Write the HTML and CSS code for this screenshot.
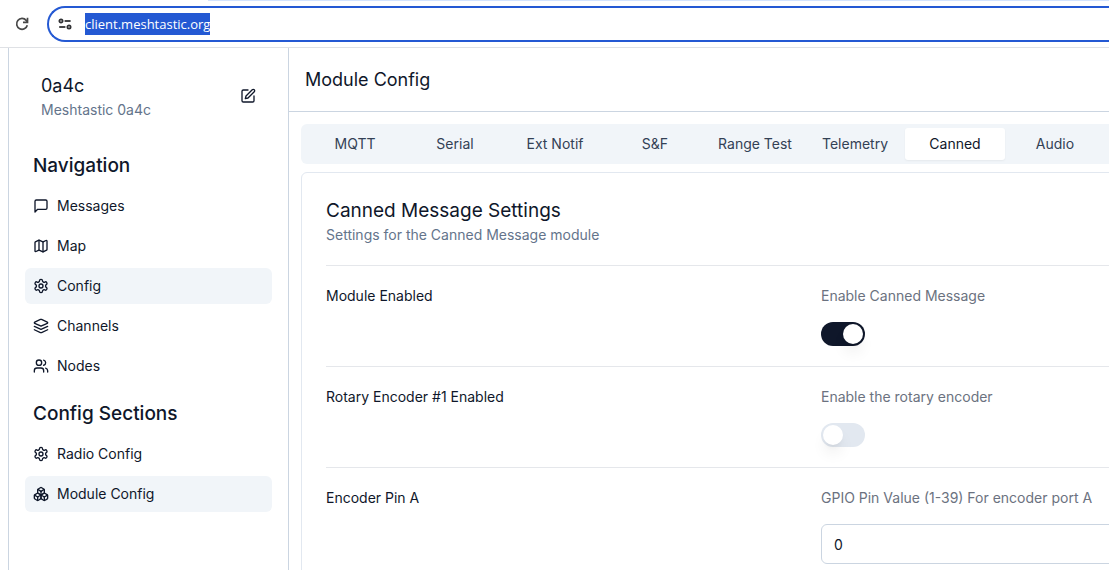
FILE: index.html
```html
<!doctype html>
<html lang="en">

<head>
	<meta charset="utf-8">
	<title>Meshtastic Web Client</title>
	<link rel="stylesheet" href="styles.css">
</head>

<body>
	<div class="browser">
		<div class="tabstrip"></div>
		<button class="reload" type="button" aria-label="Reload">
			<svg width="16" height="16" viewBox="0 0 16 16" fill="none" stroke="#474747" stroke-width="1.7">
				<path d="M13.3 9.2A5.4 5.4 0 1 1 12.2 4.4L13.4 5.8" />
				<path d="M13.5 1.8v4.6H9" />
			</svg>
		</button>
		<div class="omnibox">
			<svg width="14" height="14" viewBox="0 0 14 14" fill="none" stroke="#303134" stroke-width="1.8">
				<circle cx="3" cy="4" r="1.6" />
				<path d="M6.6 4H12.6" />
				<circle cx="11" cy="10" r="1.6" />
				<path d="M1.2 10h6.2" />
			</svg>
			<span class="url">client.meshtastic.org</span>
		</div>
	</div>
	<div class="app">
		<aside class="sidebar">
			<div class="device">
				<div>
					<div class="short-name">0a4c</div>
					<div class="subtle">Meshtastic 0a4c</div>
				</div>
				<button class="edit" type="button" aria-label="Edit device name">
					<svg class="icon" viewBox="0 0 24 24">
						<path d="M12 3H5a2 2 0 0 0-2 2v14a2 2 0 0 0 2 2h14a2 2 0 0 0 2-2v-7" />
						<path d="M18.375 2.625a2.121 2.121 0 1 1 3 3L12 15l-4 1 1-4Z" />
					</svg>
				</button>
			</div>
			<nav>
				<section class="nav-group">
					<h4>Navigation</h4>
					<button class="nav-item" type="button">
						<svg class="icon" viewBox="0 0 24 24">
							<path d="M21 15a2 2 0 0 1-2 2H7l-4 4V5a2 2 0 0 1 2-2h14a2 2 0 0 1 2 2z" />
						</svg>
						Messages
					</button>
					<button class="nav-item" type="button">
						<svg class="icon" viewBox="0 0 24 24">
							<path d="M14.106 5.553a2 2 0 0 0 1.788 0l3.659-1.83A1 1 0 0 1 21 4.619v12.764a1 1 0 0 1-.553.894l-4.553 2.277a2 2 0 0 1-1.788 0l-4.212-2.106a2 2 0 0 0-1.788 0l-3.659 1.83A1 1 0 0 1 3 19.381V6.618a1 1 0 0 1 .553-.894l4.553-2.277a2 2 0 0 1 1.788 0z" />
							<path d="M15 5.764v15" />
							<path d="M9 3.236v15" />
						</svg>
						Map
					</button>
					<button class="nav-item active" type="button">
						<svg class="icon" viewBox="0 0 24 24">
							<path d="M12.22 2h-.44a2 2 0 0 0-2 2v.18a2 2 0 0 1-1 1.73l-.43.25a2 2 0 0 1-2 0l-.15-.08a2 2 0 0 0-2.73.73l-.22.38a2 2 0 0 0 .73 2.73l.15.1a2 2 0 0 1 1 1.72v.51a2 2 0 0 1-1 1.74l-.15.09a2 2 0 0 0-.73 2.73l.22.38a2 2 0 0 0 2.73.73l.15-.08a2 2 0 0 1 2 0l.43.25a2 2 0 0 1 1 1.73V20a2 2 0 0 0 2 2h.44a2 2 0 0 0 2-2v-.18a2 2 0 0 1 1-1.73l.43-.25a2 2 0 0 1 2 0l.15.08a2 2 0 0 0 2.73-.73l.22-.39a2 2 0 0 0-.73-2.73l-.15-.08a2 2 0 0 1-1-1.74v-.5a2 2 0 0 1 1-1.74l.15-.09a2 2 0 0 0 .73-2.73l-.22-.38a2 2 0 0 0-2.73-.73l-.15.08a2 2 0 0 1-2 0l-.43-.25a2 2 0 0 1-1-1.73V4a2 2 0 0 0-2-2z" />
							<circle cx="12" cy="12" r="3" />
						</svg>
						Config
					</button>
					<button class="nav-item" type="button">
						<svg class="icon" viewBox="0 0 24 24">
							<path d="m12.83 2.18a2 2 0 0 0-1.66 0L2.6 6.08a1 1 0 0 0 0 1.83l8.58 3.91a2 2 0 0 0 1.66 0l8.58-3.9a1 1 0 0 0 0-1.83Z" />
							<path d="m22 17.65-9.17 4.16a2 2 0 0 1-1.66 0L2 17.65" />
							<path d="m22 12.65-9.17 4.16a2 2 0 0 1-1.66 0L2 12.65" />
						</svg>
						Channels
					</button>
					<button class="nav-item" type="button">
						<svg class="icon" viewBox="0 0 24 24">
							<path d="M16 21v-2a4 4 0 0 0-4-4H6a4 4 0 0 0-4 4v2" />
							<circle cx="9" cy="7" r="4" />
							<path d="M22 21v-2a4 4 0 0 0-3-3.87" />
							<path d="M16 3.13a4 4 0 0 1 0 7.75" />
						</svg>
						Nodes
					</button>
				</section>
				<section class="nav-group">
					<h4>Config Sections</h4>
					<button class="nav-item" type="button">
						<svg class="icon" viewBox="0 0 24 24">
							<path d="M12.22 2h-.44a2 2 0 0 0-2 2v.18a2 2 0 0 1-1 1.73l-.43.25a2 2 0 0 1-2 0l-.15-.08a2 2 0 0 0-2.73.73l-.22.38a2 2 0 0 0 .73 2.73l.15.1a2 2 0 0 1 1 1.72v.51a2 2 0 0 1-1 1.74l-.15.09a2 2 0 0 0-.73 2.73l.22.38a2 2 0 0 0 2.73.73l.15-.08a2 2 0 0 1 2 0l.43.25a2 2 0 0 1 1 1.73V20a2 2 0 0 0 2 2h.44a2 2 0 0 0 2-2v-.18a2 2 0 0 1 1-1.73l.43-.25a2 2 0 0 1 2 0l.15.08a2 2 0 0 0 2.73-.73l.22-.39a2 2 0 0 0-.73-2.73l-.15-.08a2 2 0 0 1-1-1.74v-.5a2 2 0 0 1 1-1.74l.15-.09a2 2 0 0 0 .73-2.73l-.22-.38a2 2 0 0 0-2.73-.73l-.15.08a2 2 0 0 1-2 0l-.43-.25a2 2 0 0 1-1-1.73V4a2 2 0 0 0-2-2z" />
							<circle cx="12" cy="12" r="3" />
						</svg>
						Radio Config
					</button>
					<button class="nav-item active" type="button">
						<svg class="icon" viewBox="0 0 24 24">
							<path d="M2.97 12.92A2 2 0 0 0 2 14.63v3.24a2 2 0 0 0 .97 1.71l3 1.8a2 2 0 0 0 2.06 0L12 19v-5.5l-5-3-4.03 2.42Z" />
							<path d="m7 16.5-4.74-2.85" />
							<path d="m7 16.5 5-3" />
							<path d="M7 16.5v5.17" />
							<path d="M12 13.5V19l3.97 2.38a2 2 0 0 0 2.06 0l3-1.8a2 2 0 0 0 .97-1.71v-3.24a2 2 0 0 0-.97-1.71L17 10.5l-5 3Z" />
							<path d="m17 16.5-5-3" />
							<path d="m17 16.5 4.74-2.85" />
							<path d="M17 16.5v5.17" />
							<path d="M7.97 4.42A2 2 0 0 0 7 6.13v4.37l5 3 5-3V6.13a2 2 0 0 0-.97-1.71l-3-1.8a2 2 0 0 0-2.06 0l-3 1.8Z" />
							<path d="M12 8 7.26 5.15" />
							<path d="m12 8 4.74-2.85" />
							<path d="M12 13.5V8" />
						</svg>
						Module Config
					</button>
				</section>
			</nav>
		</aside>
		<main class="main">
			<header class="page-header">Module Config</header>
			<div class="content">
				<div class="tabs" role="tablist">
					<button type="button" role="tab">MQTT</button>
					<button type="button" role="tab">Serial</button>
					<button type="button" role="tab">Ext Notif</button>
					<button type="button" role="tab">S&amp;F</button>
					<button type="button" role="tab">Range Test</button>
					<button type="button" role="tab">Telemetry</button>
					<button type="button" role="tab" class="active" aria-selected="true">Canned</button>
					<button type="button" role="tab">Audio</button>
				</div>
				<form class="card">
					<div class="card-head">
						<h3>Canned Message Settings</h3>
						<p class="subtle">Settings for the Canned Message module</p>
					</div>
					<div class="field">
						<label for="enabled">Module Enabled</label>
						<div class="control">
							<p>Enable Canned Message</p>
							<input class="switch" type="checkbox" id="enabled" checked>
						</div>
					</div>
					<div class="field">
						<label for="rotary">Rotary Encoder #1 Enabled</label>
						<div class="control">
							<p>Enable the rotary encoder</p>
							<input class="switch" type="checkbox" id="rotary">
						</div>
					</div>
					<div class="field">
						<label for="pinA">Encoder Pin A</label>
						<div class="control">
							<p>GPIO Pin Value (1-39) For encoder port A</p>
							<input class="text" type="text" inputmode="numeric" id="pinA" value="0">
						</div>
					</div>
				</form>
			</div>
		</main>
	</div>
</body>

</html>
```
FILE: styles.css
```css
* {
	box-sizing: border-box;
}
html,
body {
	margin: 0;
	height: 100%;
	overflow: hidden;
}
body {
	display: flex;
	flex-direction: column;
	background: #fff;
	color: #0f172a;
	font-family: Inter, sans-serif;
	font-size: 14px;
	line-height: 20px;
}
h3,
h4,
p {
	margin: 0;
}
button,
input {
	font: inherit;
	color: inherit;
}
button {
	border: 0;
	padding: 0;
	background: none;
	cursor: pointer;
}
.icon {
	width: 16px;
	height: 16px;
	flex: none;
	fill: none;
	stroke: currentColor;
	stroke-width: 2;
	stroke-linecap: round;
	stroke-linejoin: round;
}
.subtle {
	color: #64748b;
}

/* browser toolbar */
.browser {
	position: relative;
	flex: none;
	display: flex;
	align-items: center;
	gap: 17px;
	height: 48px;
	padding-left: 14px;
	border-bottom: 1px solid #dfe1e5;
}
.tabstrip {
	position: absolute;
	top: 0;
	left: 208px;
	right: 0;
	height: 1px;
	background: #d3e3fd;
}
.reload {
	display: flex;
}
.omnibox {
	flex: 1;
	display: flex;
	align-items: center;
	gap: 13px;
	height: 36px;
	padding-left: 9px;
	border: 2px solid #2459d3;
	border-right: 0;
	border-radius: 18px 0 0 18px;
}
.url {
	padding: 1px 0;
	background: #2459d3;
	color: #fff;
	font-family: "Open Sans", sans-serif;
	font-size: 13px;
}

.app {
	flex: 1;
	display: flex;
	min-height: 0;
	margin-left: 8px;
	border-left: 1px solid #cbd5e1;
}

/* sidebar */
.sidebar {
	flex: none;
	width: 280px;
	padding: 0 16px;
	border-right: 1px solid #cbd5e1;
}
.device {
	display: flex;
	align-items: center;
	justify-content: space-between;
	padding: 24px 16px;
	margin-bottom: 8px;
}
.short-name {
	font-size: 18px;
	line-height: 28px;
}
.edit {
	display: flex;
}
.nav-group {
	display: flex;
	flex-direction: column;
	gap: 4px;
	margin-bottom: 16px;
}
.nav-group h4 {
	padding: 0 8px;
	margin-bottom: 4px;
	font-size: 19px;
	font-weight: 500;
	line-height: 28px;
}
.nav-item {
	display: flex;
	align-items: center;
	gap: 8px;
	height: 36px;
	padding: 0 8px;
	border-radius: 6px;
}
.nav-item.active {
	background: #f1f5f9;
}

/* main */
.main {
	flex: 1;
	min-width: 0;
	overflow: hidden;
}
.page-header {
	height: 64px;
	padding: 18px 16px;
	border-bottom: 1px solid #cbd5e1;
	font-size: 18px;
	line-height: 28px;
}
.content {
	min-width: 1100px;
	padding: 12px;
}
.tabs {
	display: flex;
	padding: 4px;
	border-radius: 6px;
	background: #f1f5f9;
}
.tabs button {
	width: 100px;
	padding: 6px 0;
	border-radius: 3px;
	color: #334155;
}
.tabs .active {
	background: #fff;
	color: #0f172a;
	box-shadow: 0 1px 2px rgba(0, 0, 0, 0.05);
}
.card {
	margin-top: 8px;
	padding: 24px;
	border: 1px solid #e2e8f0;
	border-radius: 6px;
}
.card-head {
	padding-bottom: 20px;
}
.card-head h3 {
	font-size: 19px;
	font-weight: 400;
	line-height: 28px;
}
.field {
	display: grid;
	grid-template-columns: 479px 1fr;
	gap: 16px;
	padding: 20px 0;
	border-top: 1px solid #e5e7eb;
}
.control {
	display: flex;
	flex-direction: column;
	gap: 16px;
	color: #6b7280;
}
.switch {
	appearance: none;
	width: 44px;
	height: 24px;
	margin: 0;
	padding: 2px;
	border-radius: 12px;
	background: #e2e8f0;
	cursor: pointer;
}
.switch::before {
	content: "";
	display: block;
	width: 20px;
	height: 20px;
	border-radius: 50%;
	background: #fff;
	box-shadow: 0 10px 15px -3px rgba(0, 0, 0, 0.1), 0 4px 6px -4px rgba(0, 0, 0, 0.1);
}
.switch:checked {
	background: #0f172a;
}
.switch:checked::before {
	margin-left: 20px;
}
.text {
	width: 100%;
	height: 40px;
	padding: 8px 12px;
	border: 1px solid #cbd5e1;
	border-radius: 6px;
	color: #0f172a;
}
```
